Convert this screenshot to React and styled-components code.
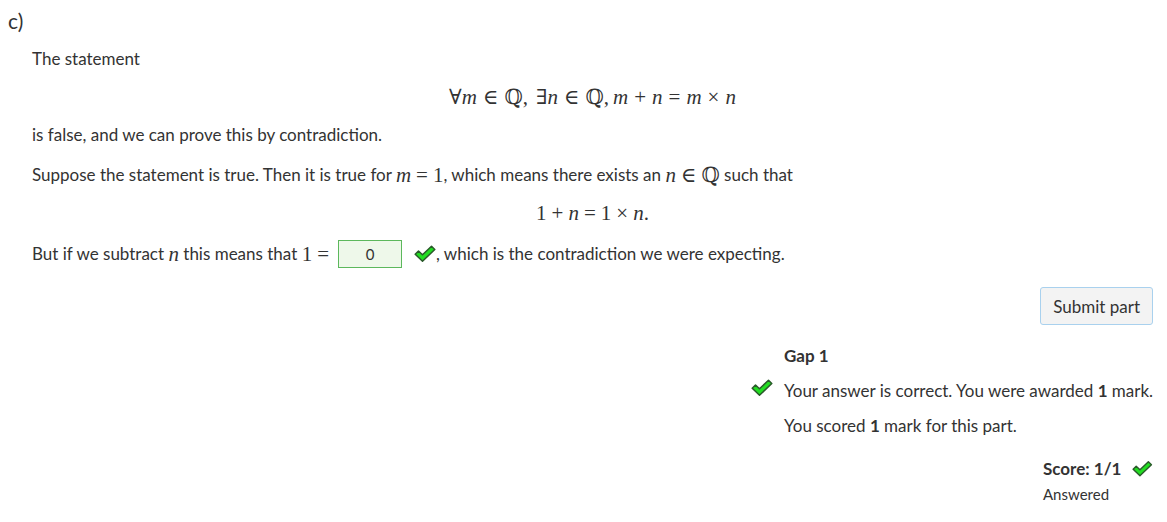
import styled, { createGlobalStyle } from 'styled-components';

const Global = createGlobalStyle`
    body {
        margin: 0;
        background: #ffffff;
        color: #333333;
        font-family: Lato, "Open Sans", sans-serif;
    }
`;

const Page = styled.div`
    width: 1167px;
    padding: 8px 14px 0 8px;
    box-sizing: border-box;
`;

const PartLabel = styled.h3`
    margin: 0;
    font-size: 21px;
    font-weight: 400;
    line-height: 26px;
`;

const Content = styled.div`
    padding-left: 24px;
    font-size: 17px;
`;

const Para = styled.p`
    margin: ${p => p.$mt || 0}px 0 0;
    line-height: 24px;
    display: flex;
    align-items: center;
    white-space: pre;
`;

const Display = styled.div`
    margin-top: ${p => p.$mt}px;
    text-align: center;
    line-height: 24px;
`;

const M = styled.span`
    font-family: "Liberation Serif", "DejaVu Serif", serif;
    font-size: 21px;
    font-style: ${p => (p.$i ? 'italic' : 'normal')};
`;

const Gap = styled.span`
    display: inline-block;
    width: ${p => p.$w || 5}px;
`;

const AnswerBox = styled.div`
    width: 62px;
    height: 26px;
    border: 1px solid #5cb85c;
    background: #eef8ea;
    font-size: 15px;
    display: flex;
    align-items: center;
    justify-content: center;
    margin: 0 12px 0 9px;
`;

const Actions = styled.div`
    display: flex;
    justify-content: flex-end;
    margin-top: 19px;
`;

const Button = styled.button`
    font-family: inherit;
    font-size: 17px;
    color: #333333;
    background: #f3f3f3;
    border: 1px solid #a9d1ee;
    border-radius: 3px;
    height: 38px;
    padding: 0 12px;
`;

const Feedback = styled.div`
    display: flex;
    flex-direction: column;
    align-items: flex-end;
    margin-top: 19px;
`;

const FeedbackList = styled.div`
    width: 369px;
    display: flex;
    flex-direction: column;
`;

const FbRow = styled.div`
    position: relative;
    line-height: 24px;
    font-size: 17px;
    margin-bottom: ${p => p.$mb || 11}px;
    font-weight: ${p => (p.$bold ? 700 : 400)};
    white-space: nowrap;
`;

const FbIcon = styled.span`
    position: absolute;
    left: -33px;
    top: 0;
`;

const ScoreBox = styled.div`
    margin-top: 8px;
    width: 110px;
    display: flex;
    flex-direction: column;
`;

const ScoreLine = styled.div`
    display: flex;
    align-items: center;
    gap: 11px;
    font-size: 17px;
    font-weight: 700;
    line-height: 24px;
    white-space: nowrap;
`;

const Status = styled.div`
    font-size: 15px;
    line-height: 20px;
    margin-top: 3px;
`;

function Tick({ size = 22 }) {
    return (
        <svg width={size} height={size * 0.8} viewBox="0 0 22 17.6">
            <path
                d="M1.2 9.3 L4.5 6 L8.5 9.8 L17.5 1.2 L20.8 4.5 L8.5 16.3 Z"
                fill="#22dd22"
                stroke="#2a5a2a"
                strokeWidth="1.5"
                strokeLinejoin="round"
            />
        </svg>
    );
}

export default function App() {
    return (
        <Page>
            <Global />
            <PartLabel>c)</PartLabel>
            <Content>
                <Para $mt={13}>The statement</Para>
                <Display $mt={14}>
                    <M>∀</M><M $i>m</M><Gap $w={6} /><M>∈</M><Gap $w={6} /><M>ℚ</M><M>,</M><Gap $w={8} />
                    <M>∃</M><M $i>n</M><Gap $w={6} /><M>∈</M><Gap $w={6} /><M>ℚ</M><M>,</M><Gap $w={4} />
                    <M $i>m</M><Gap $w={6} /><M>+</M><Gap $w={6} /><M $i>n</M><Gap $w={6} /><M>=</M><Gap $w={6} /><M $i>m</M><Gap $w={6} /><M>×</M><Gap $w={6} /><M $i>n</M>
                </Display>
                <Para $mt={13}>is false, and we can prove this by contradiction.</Para>
                <Para $mt={16}>
                    Suppose the statement is true. Then it is true for <M $i>m</M><Gap /><M>=</M><Gap /><M>1</M>, which means there exists an <M $i>n</M><Gap /><M>∈</M><Gap /><M>ℚ</M> such that
                </Para>
                <Display $mt={14}>
                    <M>1</M><Gap /><M>+</M><Gap /><M $i>n</M><Gap /><M>=</M><Gap /><M>1</M><Gap /><M>×</M><Gap /><M $i>n</M><M>.</M>
                </Display>
                <Para $mt={14}>
                    But if we subtract <M $i>n</M> this means that <M>1</M><Gap /><M>=</M>
                    <AnswerBox>0</AnswerBox>
                    <Tick />, which is the contradiction we were expecting.
                </Para>
                <Actions>
                    <Button>Submit part</Button>
                </Actions>
                <Feedback>
                    <FeedbackList>
                        <FbRow $bold>Gap 1</FbRow>
                        <FbRow>
                            <FbIcon><Tick /></FbIcon>
                            Your answer is correct. You were awarded <b>1</b> mark.
                        </FbRow>
                        <FbRow $mb={0}>You scored <b>1</b> mark for this part.</FbRow>
                    </FeedbackList>
                    <ScoreBox>
                        <ScoreLine>Score: 1/1 <Tick /></ScoreLine>
                        <Status>Answered</Status>
                    </ScoreBox>
                </Feedback>
            </Content>
        </Page>
    );
}
